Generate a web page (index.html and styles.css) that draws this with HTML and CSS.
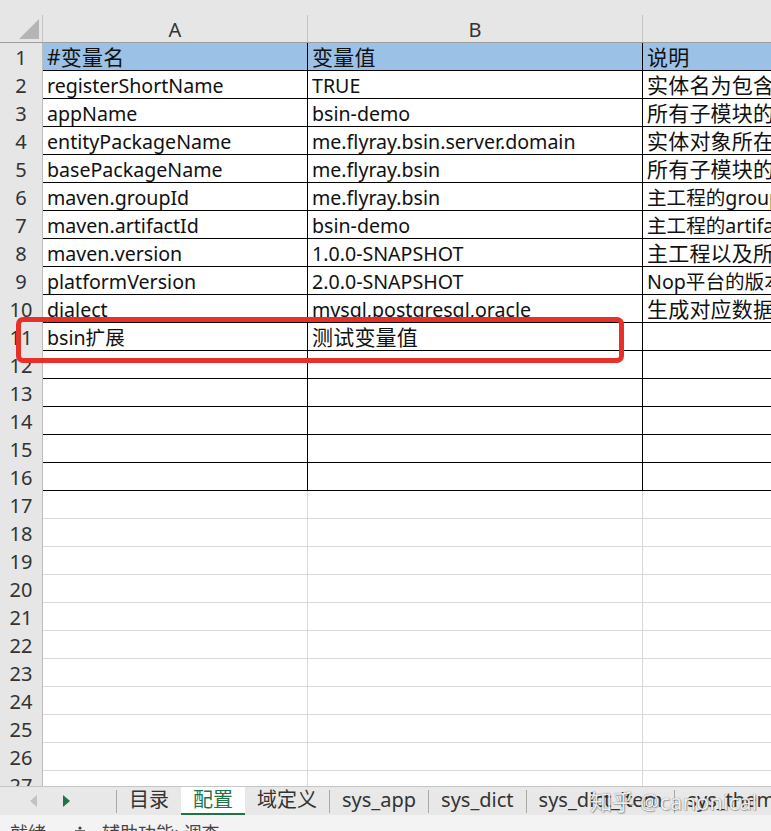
FILE: index.html
```html
<!DOCTYPE html>
<html lang="zh-CN">
<head>
    <meta charset="UTF-8">
    <meta name="viewport" content="width=device-width, initial-scale=1.0">
    <title>配置</title>
    <link rel="stylesheet" href="styles.css">
</head>
<body>
    <div class="sheet">
        <div class="colhead">
            <div class="corner"><span class="tri"></span></div>
            <div class="ch">A</div>
            <div class="ch">B</div>
            <div class="ch">C</div>
        </div>

        <div class="row b hl"><div class="rn">1</div><div class="c zh">#变量名</div><div class="c zh">变量值</div><div class="c zh">说明</div></div>
        <div class="row b"><div class="rn">2</div><div class="c">registerShortName</div><div class="c">TRUE</div><div class="c zh">实体名为包含模块前缀的短名称</div></div>
        <div class="row b"><div class="rn">3</div><div class="c">appName</div><div class="c">bsin-demo</div><div class="c zh">所有子模块的公共前缀</div></div>
        <div class="row b"><div class="rn">4</div><div class="c">entityPackageName</div><div class="c">me.flyray.bsin.server.domain</div><div class="c zh">实体对象所在的包名</div></div>
        <div class="row b"><div class="rn">5</div><div class="c">basePackageName</div><div class="c">me.flyray.bsin</div><div class="c zh">所有子模块的基础包名</div></div>
        <div class="row b"><div class="rn">6</div><div class="c">maven.groupId</div><div class="c">me.flyray.bsin</div><div class="c">主工程的groupId</div></div>
        <div class="row b"><div class="rn">7</div><div class="c">maven.artifactId</div><div class="c">bsin-demo</div><div class="c">主工程的artifactId</div></div>
        <div class="row b"><div class="rn">8</div><div class="c">maven.version</div><div class="c">1.0.0-SNAPSHOT</div><div class="c zh">主工程以及所有子模块的版本</div></div>
        <div class="row b"><div class="rn">9</div><div class="c">platformVersion</div><div class="c">2.0.0-SNAPSHOT</div><div class="c">Nop平台的版本</div></div>
        <div class="row b"><div class="rn">10</div><div class="c">dialect</div><div class="c">mysql,postgresql,oracle</div><div class="c zh">生成对应数据库的建表语句</div></div>
        <div class="row b"><div class="rn">11</div><div class="c">bsin扩展</div><div class="c zh">测试变量值</div><div class="c"></div></div>
        <div class="row b"><div class="rn">12</div><div class="c"></div><div class="c"></div><div class="c"></div></div>
        <div class="row b"><div class="rn">13</div><div class="c"></div><div class="c"></div><div class="c"></div></div>
        <div class="row b"><div class="rn">14</div><div class="c"></div><div class="c"></div><div class="c"></div></div>
        <div class="row b"><div class="rn">15</div><div class="c"></div><div class="c"></div><div class="c"></div></div>
        <div class="row b"><div class="rn">16</div><div class="c"></div><div class="c"></div><div class="c"></div></div>
        <div class="row"><div class="rn">17</div><div class="c"></div><div class="c"></div><div class="c"></div></div>
        <div class="row"><div class="rn">18</div><div class="c"></div><div class="c"></div><div class="c"></div></div>
        <div class="row"><div class="rn">19</div><div class="c"></div><div class="c"></div><div class="c"></div></div>
        <div class="row"><div class="rn">20</div><div class="c"></div><div class="c"></div><div class="c"></div></div>
        <div class="row"><div class="rn">21</div><div class="c"></div><div class="c"></div><div class="c"></div></div>
        <div class="row"><div class="rn">22</div><div class="c"></div><div class="c"></div><div class="c"></div></div>
        <div class="row"><div class="rn">23</div><div class="c"></div><div class="c"></div><div class="c"></div></div>
        <div class="row"><div class="rn">24</div><div class="c"></div><div class="c"></div><div class="c"></div></div>
        <div class="row"><div class="rn">25</div><div class="c"></div><div class="c"></div><div class="c"></div></div>
        <div class="row"><div class="rn">26</div><div class="c"></div><div class="c"></div><div class="c"></div></div>
        <div class="row"><div class="rn">27</div><div class="c"></div><div class="c"></div><div class="c"></div></div>

        <!-- highlight around the new row -->
        <div class="mark"></div>
    </div>

    <div class="tabs">
        <div class="nav">
            <span class="arrow prev"></span>
            <span class="arrow next"></span>
        </div>
        <span class="sep"></span>
        <div class="tab">目录</div>
        <div class="tab on">配置</div>
        <div class="tab">域定义</div>
        <span class="sep"></span>
        <div class="tab">sys_app</div>
        <span class="sep"></span>
        <div class="tab">sys_dict</div>
        <span class="sep"></span>
        <div class="tab">sys_dict_item</div>
        <span class="sep"></span>
        <div class="tab">sys_theme</div>
        <div class="watermark">知乎 @canonical</div>
    </div>

    <div class="status">
        <span>就绪</span>
        <svg class="acc" width="12" height="14" viewBox="0 0 12 14">
            <circle cx="6" cy="2" r="1.6" fill="#444"/>
            <path d="M1 5h10M6 5v4l-3 4M6 9l3 4" stroke="#444" stroke-width="1.3" fill="none"/>
        </svg>
        <span>辅助功能: 调查</span>
    </div>
</body>
</html>
```

FILE: styles.css
```css
body {
    margin: 0;
    width: 771px;
    height: 831px;
    overflow: hidden;
    display: flex;
    flex-direction: column;
    background-color: #fff;
    font-family: "Noto Sans", "Noto Sans CJK SC", sans-serif;
    color: #111;
}
.sheet {
    position: relative;
    height: 786px;
    flex: none;
    overflow: hidden;
}
.colhead, .row {
    display: grid;
    grid-template-columns: 43px 265px 335px 270px;
}
.colhead {
    height: 43px;
    background-color: #e6e6e6;
    border-bottom: 1px solid #9e9e9e;
    box-sizing: border-box;
}
.corner, .ch {
    margin-top: 15px;
    border-right: 1px solid #c4c4c4;
}
.corner {
    display: flex;
    justify-content: flex-end;
    align-items: flex-end;
    padding: 0 3px 3px 0;
}
.tri {
    width: 0;
    height: 0;
    border-left: 20px solid transparent;
    border-bottom: 20px solid #b5b5b5;
}
.ch {
    padding-top: 2px;
    text-align: center;
    font-size: 20px;
    line-height: 25px;
    color: #333;
}
.row {
    height: 28px;
}
.rn {
    background-color: #e6e6e6;
    border-right: 1px solid #bdbdbd;
    padding-top: 2px;
    text-align: center;
    font-size: 20px;
    line-height: 26px;
    color: #333;
}
.c {
    border-right: 1px solid #d9d9d9;
    border-bottom: 1px solid #d9d9d9;
    padding: 2px 0 0 4px;
    font-size: 19.6px;
    line-height: 25px;
    white-space: nowrap;
}
.c.zh {
    font-size: 21px;
    letter-spacing: 0.2px;
}
.row.b .c {
    border-color: #000;
}
.row.hl .c {
    background-color: #9bc2e6;
}
.mark {
    position: absolute;
    left: 16px;
    top: 317px;
    width: 608px;
    height: 46px;
    border: 5px solid #e8302a;
    border-radius: 7px;
    box-sizing: border-box;
}
.tabs {
    position: relative;
    display: flex;
    height: 29px;
    flex: none;
    background-color: #e8e8e8;
    border-top: 1px solid #c6c6c6;
    box-sizing: border-box;
    font-size: 20px;
    line-height: 26px;
    color: #333;
    white-space: nowrap;
}
.tabs > * {
    flex: none;
}
.nav {
    width: 116px;
    display: flex;
    align-items: center;
    gap: 26px;
    padding-left: 30px;
    box-sizing: border-box;
}
.arrow {
    width: 0;
    height: 0;
    border-top: 6px solid transparent;
    border-bottom: 6px solid transparent;
}
.arrow.prev {
    border-right: 7px solid #c2c2c2;
}
.arrow.next {
    border-left: 7px solid #217346;
}
.sep {
    width: 1px;
    margin: 3px 0 2px;
    background-color: #a8a8a8;
}
.tab {
    padding: 0 12px;
}
.tab.on {
    background-color: #fff;
    color: #217346;
    border-bottom: 2px solid #217346;
}
.watermark {
    position: absolute;
    left: 590px;
    top: 1px;
    font-size: 22px;
    color: rgba(255, 255, 255, 0.92);
    text-shadow: 0 0 1px rgba(0, 0, 0, 0.6), 1px 1px 1px rgba(0, 0, 0, 0.25);
}
.status {
    flex: 1;
    display: flex;
    align-items: flex-start;
    gap: 10px;
    padding: 6px 0 0 10px;
    background-color: #f3f3f3;
    font-size: 18px;
    line-height: 24px;
    color: #444;
    overflow: hidden;
}
.status .acc {
    margin: 5px 6px 0 18px;
}
```
